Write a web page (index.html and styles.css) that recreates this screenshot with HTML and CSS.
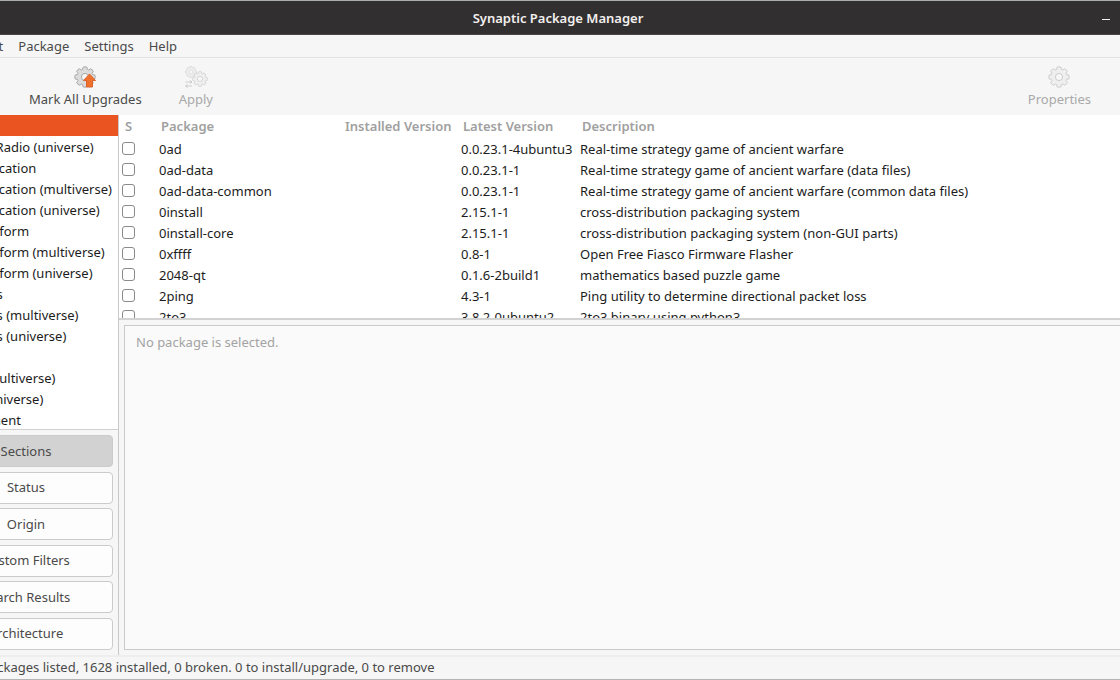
FILE: index.html
```html
<!DOCTYPE html>
<html lang="en">
<head>
<meta charset="utf-8">
<title>Synaptic Package Manager</title>
<link rel="stylesheet" href="styles.css">
</head>
<body>
<svg class="defs" aria-hidden="true">
  <symbol id="gear" viewBox="0 0 22 22">
    <path d="M8.6 3.5 9 1.2Q11 .4 13 1.2L13.4 3.5 14.7 4 16.6 2.8Q18.6 3.5 19.3 5.5L18 7.4 18.5 8.6 20.8 9Q21.6 11 20.8 13L18.5 13.4 18 14.6 19.3 16.5Q18.6 18.5 16.6 19.2L14.7 18 13.4 18.5 13 20.8Q11 21.6 9 20.8L8.6 18.5 7.3 18 5.4 19.2Q3.4 18.5 2.7 16.5L4 14.6 3.5 13.4 1.2 13Q.4 11 1.2 9L3.5 8.6 4 7.4 2.7 5.5Q3.4 3.5 5.4 2.8L7.3 4Z"/>
    <circle cx="11" cy="11" r="3.6" fill="#f7f7f7"/>
  </symbol>
</svg>
<div class="window">
  <header class="titlebar">
    <h1>Synaptic Package Manager</h1>
    <button class="minimize" aria-label="Minimize"></button>
  </header>
  <nav class="menubar">
    <button>Edit</button><button>Package</button><button>Settings</button><button>Help</button>
  </nav>
  <div class="toolbar">
    <button class="tool">
      <svg class="icon strong" viewBox="0 0 22 22"><use href="#gear"/><path class="arrow" d="M15.5 8 21.5 14.500H18.500V21H12.500V14.500H9.500Z"/></svg>
      Mark All Upgrades
    </button>
    <button class="tool" disabled>
      <svg class="icon wide" viewBox="0 0 24 22"><use href="#gear" x="1" y="0" width="12" height="12"/><use href="#gear" x="8" y="5" width="16" height="16"/><path d="M1.500 16H8M6 14.500 8 16 6 17.500M8 20H1.500M3.500 18.500 1.500 20 3.500 21.500"/></svg>
      Apply
    </button>
    <button class="tool last" disabled>
      <svg class="icon" viewBox="0 0 22 22"><use href="#gear"/></svg>
      Properties
    </button>
  </div>
  <main class="content">
    <aside class="sidebar">
      <ul class="sections">
        <li class="selected"></li>
        <li>Amateur Radio (universe)</li>
        <li>Communication</li>
        <li>Communication (multiverse)</li>
        <li>Communication (universe)</li>
        <li>Cross Platform</li>
        <li>Cross Platform (multiverse)</li>
        <li>Cross Platform (universe)</li>
        <li>Databases</li>
        <li>Databases (multiverse)</li>
        <li>Databases (universe)</li>
        <li></li>
        <li>Debug (multiverse)</li>
        <li>Debug (universe)</li>
        <li>Development</li>
      </ul>
      <div class="filters">
        <button class="active">Sections</button>
        <button>Status</button>
        <button>Origin</button>
        <button>Custom Filters</button>
        <button>Search Results</button>
        <button>Architecture</button>
      </div>
    </aside>
    <section class="packages">
      <div class="list">
        <table>
          <colgroup><col class="c-mark"><col class="c-name"><col class="c-installed"><col class="c-latest"><col></colgroup>
          <thead><tr><th>S</th><th>Package</th><th>Installed Version</th><th>Latest Version</th><th>Description</th></tr></thead>
          <tbody>
            <tr><td><input type="checkbox" aria-label="0ad"></td><td>0ad</td><td></td><td>0.0.23.1-4ubuntu3</td><td>Real-time strategy game of ancient warfare</td></tr>
            <tr><td><input type="checkbox" aria-label="0ad-data"></td><td>0ad-data</td><td></td><td>0.0.23.1-1</td><td>Real-time strategy game of ancient warfare (data files)</td></tr>
            <tr><td><input type="checkbox" aria-label="0ad-data-common"></td><td>0ad-data-common</td><td></td><td>0.0.23.1-1</td><td>Real-time strategy game of ancient warfare (common data files)</td></tr>
            <tr><td><input type="checkbox" aria-label="0install"></td><td>0install</td><td></td><td>2.15.1-1</td><td>cross-distribution packaging system</td></tr>
            <tr><td><input type="checkbox" aria-label="0install-core"></td><td>0install-core</td><td></td><td>2.15.1-1</td><td>cross-distribution packaging system (non-GUI parts)</td></tr>
            <tr><td><input type="checkbox" aria-label="0xffff"></td><td>0xffff</td><td></td><td>0.8-1</td><td>Open Free Fiasco Firmware Flasher</td></tr>
            <tr><td><input type="checkbox" aria-label="2048-qt"></td><td>2048-qt</td><td></td><td>0.1.6-2build1</td><td>mathematics based puzzle game</td></tr>
            <tr><td><input type="checkbox" aria-label="2ping"></td><td>2ping</td><td></td><td>4.3-1</td><td>Ping utility to determine directional packet loss</td></tr>
            <tr><td><input type="checkbox" aria-label="2to3"></td><td>2to3</td><td></td><td>3.8.2-0ubuntu2</td><td>2to3 binary using python3</td></tr>
          </tbody>
        </table>
      </div>
      <div class="details">No package is selected.</div>
    </section>
  </main>
  <footer class="status">packages listed, 1628 installed, 0 broken. 0 to install/upgrade, 0 to remove</footer>
</div>
</body>
</html>
```
FILE: styles.css
```css
* { box-sizing: border-box; }
body {
  margin: 0;
  overflow: hidden;
  background: #f6f6f6;
  color: #4a4a4a;
  font: 13px/21px "Noto Sans", "Open Sans", sans-serif;
}
button { font: inherit; color: inherit; background: none; border: 0; padding: 0; margin: 0; white-space: nowrap; }
.defs { position: absolute; width: 0; height: 0; }

/* The window is panned: its left edge lies outside the viewport. */
.window {
  display: flex;
  flex-direction: column;
  height: 100vh;
  margin-left: -64px;
  border-top: 1px solid #a9aeac;
  border-bottom: 1px solid #b4b4b4;
}
.titlebar {
  display: flex;
  align-items: center;
  flex: none;
  height: 34px;
  padding: 0 10px 0 78px;
  background: #322f30;
  border-bottom: 1px solid #484546;
  color: #f2f0ef;
}
.titlebar h1 { flex: 1; margin: 0; padding-top: 2px; font-size: 13px; font-weight: 600; text-align: center; }
.minimize { width: 8px; height: 12px; border-bottom: 1px solid #f2f0ef; margin-bottom: 8px; }
.menubar {
  display: flex;
  gap: 15px;
  flex: none;
  height: 23px;
  padding-left: 44px;
  border-bottom: 1px solid #e3e3e3;
}
.toolbar { display: flex; flex: none; height: 57px; padding: 8px 29px 0 93px; gap: 37px; }
.tool { display: flex; flex-direction: column; align-items: center; line-height: 21px; gap: 1px; height: 44px; }
.tool:disabled { color: #a9a9a9; }
.tool.last { margin-left: auto; }
.icon { width: 22px; height: 22px; fill: #efefef; stroke: #cdcdcd; stroke-width: 1; flex: none; }
.icon.wide { width: 24px; }
.icon.strong { fill: #dcdcdc; stroke: #a9a9a9; }
.icon .arrow { fill: #f0702d; stroke: #d9652b; }

.content { display: flex; flex: 1; min-height: 0; }
.sidebar { display: flex; flex-direction: column; flex: none; width: 183px; border-right: 1px solid #c8c8c8; }
.sections {
  flex: 1;
  min-height: 0;
  margin: 0;
  padding: 0;
  overflow: hidden;
  list-style: none;
  background: #fff;
  color: #1c1c1c;
  border-bottom: 1px solid #d0d0d0;
}
.sections li { height: 21px; padding-left: 3px; white-space: nowrap; }
.sections .selected { background: #e95420; margin-bottom: 1px; }
.filters {
  display: flex;
  flex-direction: column;
  justify-content: space-between;
  flex: none;
  height: 225px;
  padding: 5px 5px 5px 3px;
}
.filters button {
  height: 32px;
  background: #fdfdfd;
  border: 1px solid #cbcbcb;
  border-radius: 4px;
}
.filters .active { background: #d2d2d2; }

.packages { display: flex; flex-direction: column; flex: 1; min-width: 0; }
.list { flex: none; height: 205px; overflow: hidden; background: #fff; border-bottom: 2px solid #d2d2d2; }
table { width: 100%; border-collapse: collapse; table-layout: fixed; color: #1c1c1c; }
.c-mark { width: 36px; }
.c-name { width: 184px; }
.c-installed { width: 118px; }
.c-latest { width: 119px; }
th, td { padding: 0 0 0 4px; text-align: left; white-space: nowrap; height: 21px; }
td { padding-top: 2px; line-height: 19px; }
th { padding-left: 6px; height: 23px; color: #a0a0a0; font-weight: 600; }
td:first-child { padding: 0 0 0 3px; }
input[type="checkbox"] {
  display: block;
  appearance: none;
  width: 13px;
  height: 13px;
  margin: 0;
  border: 1px solid #8a8a8a;
  border-radius: 3px;
  background: #fff;
}
.details {
  flex: 1;
  margin: 5px 0 5px 5px;
  padding: 6px 11px;
  background: #fafafa;
  border: 1px solid #cacaca;
  border-right: 0;
  color: #a3a3a3;
}
.status {
  flex: none;
  height: 24px;
  padding-left: 46px;
  border-top: 2px solid #eee;
  white-space: nowrap;
}
```
